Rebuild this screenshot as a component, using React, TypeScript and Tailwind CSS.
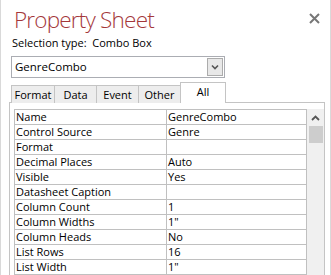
import React from 'react';

const rows: [string, string][] = [
  ['Name', 'GenreCombo'],
  ['Control Source', 'Genre'],
  ['Format', ''],
  ['Decimal Places', 'Auto'],
  ['Visible', 'Yes'],
  ['Datasheet Caption', ''],
  ['Column Count', '1'],
  ['Column Widths', '1"'],
  ['Column Heads', 'No'],
  ['List Rows', '16'],
  ['List Width', '1"'],
];

const tabs = ['Format', 'Data', 'Event', 'Other'];

const App: React.FC = () => {
  return (
    <div className="w-[331px] h-[275px] overflow-hidden bg-white border-x border-[#d9d9d9] relative font-['Open_Sans',sans-serif] text-black">
      {/* header */}
      <div className="pl-[13px] pt-[5px] text-[22.5px] leading-[30px] font-light text-[#a4373a] tracking-[-0.8px]">
        Property Sheet
      </div>
      <svg className="absolute right-[10px] top-[13px]" width="11" height="11" viewBox="0 0 11 11">
        <path d="M1 1L10 10M10 1L1 10" stroke="#777" strokeWidth="2" />
      </svg>
      <div className="pl-[11px] text-[11px] leading-[16px] whitespace-pre">Selection type:  Combo Box</div>

      {/* combo */}
      <div className="ml-[10px] mt-[5px] w-[214px] h-[22px] border border-[#abadb3] flex items-center justify-between">
        <span className="pl-[3px] text-[11.5px] leading-none">GenreCombo</span>
        <div className="w-[16px] h-[18px] mr-[1px] border border-[#acacac] bg-[#e8e8e8] flex items-center justify-center">
          <svg width="8" height="6" viewBox="0 0 8 6">
            <path d="M1 1.5L4 4.5L7 1.5" stroke="#555" strokeWidth="1.6" fill="none" />
          </svg>
        </div>
      </div>

      {/* tabs */}
      <div className="ml-[10px] mt-[4px] flex items-end h-[21px] relative z-10">
        {tabs.map((t) => (
          <div
            key={t}
            className="h-[18px] w-[43px] -mr-px border border-b-0 border-[#c4c4c4] bg-[#ededed] text-[11px] leading-[17px] text-center first:w-[44px]"
          >
            {t}
          </div>
        ))}
        <div className="h-[21px] w-[46px] border border-b-0 border-[#c4c4c4] bg-white text-[11px] leading-[17px] text-center">
          All
        </div>
      </div>

      {/* panel */}
      <div className="ml-[8px] -mt-px w-[316px] h-[200px] border border-[#c4c4c4] flex pt-[6px] pl-[4px]">
        <div className="w-[293px] border-t border-l border-[#c0c0c0] self-start">
          {rows.map(([k, v]) => (
            <div key={k} className="flex h-[15px] text-[11px] leading-[14px]">
              <div className="w-[152px] border-r border-b border-[#c0c0c0] pl-[1px] whitespace-nowrap">{k}</div>
              <div className="w-[140px] border-r border-b border-[#c0c0c0] pl-[1px] whitespace-nowrap">{v}</div>
            </div>
          ))}
        </div>
        <div className="w-[17px] bg-[#f0f0f0] h-full flex flex-col items-center">
          <svg className="mt-[6px]" width="9" height="6" viewBox="0 0 9 6">
            <path d="M1 5L4.5 1.5L8 5" stroke="#555" strokeWidth="1.8" fill="none" />
          </svg>
          <div className="mt-[5px] w-[14px] h-[17px] bg-[#cdcdcd]" />
        </div>
      </div>
    </div>
  );
};

export default App;
